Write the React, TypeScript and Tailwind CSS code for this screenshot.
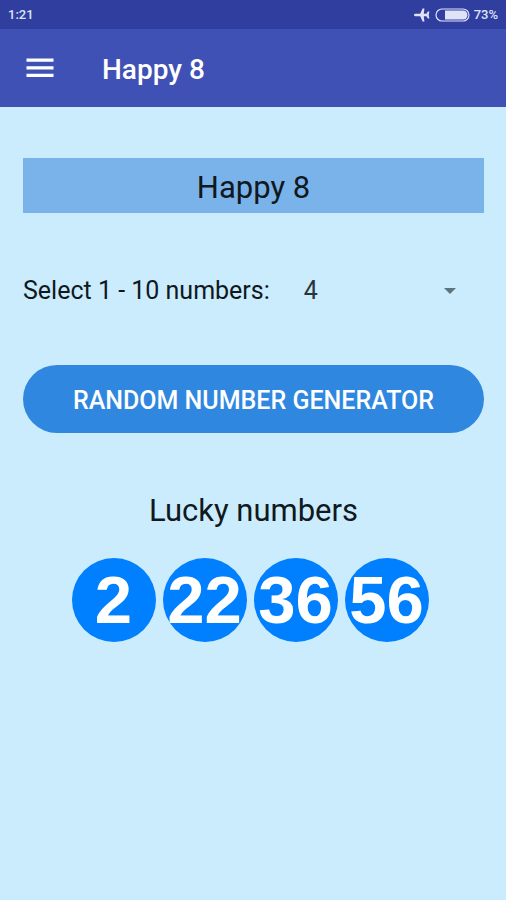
import { useState } from "react"

const MAX_PICK = 10
const POOL_SIZE = 80

function pickNumbers(count: number) {
    const picked = new Set<number>()
    while (picked.size < count) {
        picked.add(Math.floor(Math.random() * POOL_SIZE) + 1)
    }
    return [...picked].sort((a, b) => a - b)
}

function StatusBar() {
    return (
        <div className="flex h-[29px] items-center justify-between bg-[#303f9f] px-2 text-[13px] font-medium text-[#dfe3f8]">
            <span>1:21</span>
            <div className="flex items-center gap-1">
                <svg viewBox="0 0 18 14" className="h-[14px] w-[18px]" fill="currentColor" aria-hidden="true">
                    <path d="M1 7q0-1.3 1.6-1.3h4.6L9.6.4h1.8L10.8 5.7h2.6l1.5-2.2h1.5L15.7 7l.7 3.5h-1.5l-1.5-2.2h-2.6l.6 5.3H9.6L7.2 8.3H2.6Q1 8.3 1 7z" />
                </svg>
                <svg viewBox="0 0 35 14" className="h-[14px] w-[35px]" aria-hidden="true">
                    <rect x="1" y="1" width="33" height="12" rx="6" fill="none" stroke="currentColor" strokeWidth="1.2" />
                    <path d="M10 2.5h18a4.5 4.5 0 0 1 0 9H10z" fill="currentColor" />
                </svg>
                <span>73%</span>
            </div>
        </div>
    )
}

function AppBar() {
    return (
        <header className="flex h-[78px] items-center gap-12 bg-[#3f51b5] px-[26px] text-white">
            <button type="button" aria-label="Open menu">
                <svg viewBox="0 0 28 20" className="h-5 w-7" fill="currentColor" aria-hidden="true">
                    <path d="M.5.5h27v3.2H.5zM.5 8.2h27v3.2H.5zM.5 15.8h27V19H.5z" />
                </svg>
            </button>
            <h1 className="pt-1 text-[28px] leading-9 font-medium">Happy 8</h1>
        </header>
    )
}

function Ball({ value }: { value: number }) {
    return (
        <li className="mr-[7px] flex size-[84px] items-center justify-center rounded-full bg-[#007fff] font-['Liberation_Sans',sans-serif] text-[67px] leading-[84px] font-bold text-white">
            {value}
        </li>
    )
}

export default function App() {
    const [count, setCount] = useState(4)
    const [numbers, setNumbers] = useState([2, 22, 36, 56])

    return (
        <div className="min-h-screen bg-[#cbecfd] font-[Roboto,sans-serif] text-[#101820]">
            <StatusBar />
            <AppBar />
            <main className="flex flex-col pt-[51px] pr-[22px] pl-[23px]">
                <h2 className="bg-[#7ab2ea] pt-[10px] pb-[6px] text-center text-[31px] leading-[39px]">Happy 8</h2>

                <div className="mt-[58px] flex items-center text-[25px] leading-10">
                    <label htmlFor="count">Select 1 - 10 numbers:</label>
                    <div className="relative ml-[34px] flex-1">
                        <select
                            id="count"
                            value={count}
                            onChange={(e) => setCount(Number(e.target.value))}
                            className="block w-full appearance-none bg-transparent text-[#2b343a]"
                        >
                            {Array.from({ length: MAX_PICK }, (_, i) => (
                                <option key={i + 1} value={i + 1}>{i + 1}</option>
                            ))}
                        </select>
                        <svg
                            viewBox="0 0 12 6"
                            className="pointer-events-none absolute top-1/2 right-7 h-[6px] w-3 -translate-y-1/2"
                            fill="#5b7480"
                            aria-hidden="true"
                        >
                            <path d="M0 0h12L6 6z" />
                        </svg>
                    </div>
                </div>

                <button
                    type="button"
                    onClick={() => setNumbers(pickNumbers(count))}
                    className="mt-[54px] rounded-full bg-[#3087e0] pt-[18px] pb-[14px] text-[25px] leading-9 font-medium text-white uppercase"
                >
                    Random number generator
                </button>

                <h3 className="mt-[58px] text-center text-[31px] leading-[39px]">Lucky numbers</h3>
                <ul className="mt-7 flex flex-wrap justify-center gap-y-2">
                    {numbers.map((n) => (
                        <Ball key={n} value={n} />
                    ))}
                </ul>
            </main>
        </div>
    )
}
